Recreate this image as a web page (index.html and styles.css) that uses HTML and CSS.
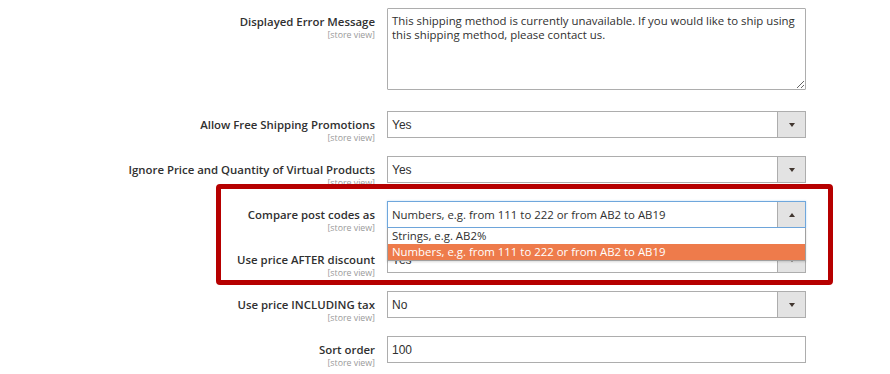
FILE: index.html
```html
<!DOCTYPE html>
<html lang="en">
<head>
<meta charset="utf-8">
<title>Table rates settings</title>
<link rel="stylesheet" href="styles.css">
</head>
<body>
<div class="page">
  <form class="config">
    <div class="row row-tall">
      <div class="label"><span class="title">Displayed Error Message</span><span class="scope">[store view]</span></div>
      <div class="control"><textarea class="textarea" readonly>This shipping method is currently unavailable. If you would like to ship using this shipping method, please contact us.</textarea></div>
    </div>
    <div class="row">
      <div class="label"><span class="title">Allow Free Shipping Promotions</span><span class="scope">[store view]</span></div>
      <div class="control"><div class="select"><span class="value">Yes</span><span class="btn"><span class="tri down"></span></span></div></div>
    </div>
    <div class="row">
      <div class="label"><span class="title">Ignore Price and Quantity of Virtual Products</span><span class="scope">[store view]</span></div>
      <div class="control"><div class="select"><span class="value">Yes</span><span class="btn"><span class="tri down"></span></span></div></div>
    </div>
    <div class="row">
      <div class="label"><span class="title">Compare post codes as</span><span class="scope">[store view]</span></div>
      <div class="control">
        <div class="select focused"><span class="value sans">Numbers, e.g. from 111 to 222 or from AB2 to AB19</span><span class="btn"><span class="tri up"></span></span></div>
        <ul class="dropdown">
          <li class="option">Strings, e.g. AB2%</li>
          <li class="option selected">Numbers, e.g. from 111 to 222 or from AB2 to AB19</li>
        </ul>
      </div>
    </div>
    <div class="row">
      <div class="label"><span class="title">Use price AFTER discount</span><span class="scope">[store view]</span></div>
      <div class="control"><div class="select"><span class="value">Yes</span><span class="btn"><span class="tri down"></span></span></div></div>
    </div>
    <div class="row">
      <div class="label"><span class="title">Use price INCLUDING tax</span><span class="scope">[store view]</span></div>
      <div class="control"><div class="select"><span class="value">No</span><span class="btn"><span class="tri down"></span></span></div></div>
    </div>
    <div class="row">
      <div class="label"><span class="title">Sort order</span><span class="scope">[store view]</span></div>
      <div class="control"><div class="input"><span class="value">100</span></div></div>
    </div>
  </form>
  <div class="highlight"></div>
</div>
</body>
</html>
```
FILE: styles.css
```css
html, body {
  margin: 0;
  padding: 0;
  background: #ffffff;
}

.page {
  position: relative;
  width: 890px;
  height: 374px;
  overflow: hidden;
  font-family: "Open Sans", "Liberation Sans", sans-serif;
  color: #303030;
}

.config {
  display: flex;
  flex-direction: column;
  gap: 18px;
  padding-top: 8px;
}

.row {
  display: grid;
  grid-template-columns: 375px 419px;
  grid-template-rows: 27px;
  column-gap: 12px;
  height: 27px;
}

.row-tall {
  grid-template-rows: 82px;
  height: 82px;
  margin-bottom: 3px;
}

.label {
  display: flex;
  flex-direction: column;
  align-items: flex-end;
  text-align: right;
  padding-top: 5px;
  min-height: 0;
}

.title {
  font-size: 11.4px;
  font-weight: 600;
  line-height: 17px;
  color: #303030;
  white-space: nowrap;
}

.scope {
  font-size: 8.8px;
  line-height: 10px;
  color: #9a9a9a;
  white-space: nowrap;
}

.control {
  position: relative;
}

.textarea {
  display: block;
  box-sizing: border-box;
  width: 419px;
  height: 82px;
  margin: 0;
  padding: 5px 4px;
  border: 1px solid #adadad;
  border-radius: 1px;
  font-family: "Open Sans", "Liberation Sans", sans-serif;
  font-size: 11.4px;
  line-height: 14px;
  color: #303030;
  background: #ffffff;
  outline: none;
  resize: vertical;
}

.select,
.input {
  box-sizing: border-box;
  display: flex;
  align-items: stretch;
  height: 27px;
  border: 1px solid #adadad;
  background: #ffffff;
}

.value {
  flex: 1;
  display: flex;
  align-items: center;
  padding-left: 4px;
  font-family: "Liberation Sans", Arial, sans-serif;
  font-size: 12px;
  color: #303030;
  white-space: nowrap;
  overflow: hidden;
}

.value.sans {
  font-family: "Open Sans", "Liberation Sans", sans-serif;
  font-size: 11.4px;
}

.btn {
  width: 27px;
  display: flex;
  align-items: center;
  justify-content: center;
  background: #e3e3e3;
  border-left: 1px solid #adadad;
}

.tri {
  width: 0;
  height: 0;
  border-left: 3.5px solid transparent;
  border-right: 3.5px solid transparent;
}

.tri.down {
  border-top: 4px solid #41362f;
}

.tri.up {
  border-bottom: 4px solid #41362f;
}

.select.focused {
  border-color: #6fa7dc;
  box-shadow: 0 0 2px rgba(0, 110, 210, 0.25);
}

.dropdown {
  position: absolute;
  left: 0;
  top: 27px;
  width: 419px;
  box-sizing: border-box;
  margin: 0;
  padding: 0;
  list-style: none;
  background: #ffffff;
  border: 1px solid #a0a0a0;
  border-top: none;
  box-shadow: 0 1px 2px rgba(0, 0, 0, 0.15);
  z-index: 2;
}

.option {
  height: 16px;
  line-height: 16px;
  padding-left: 4px;
  font-family: "Open Sans", "Liberation Sans", sans-serif;
  font-size: 11.4px;
  color: #303030;
  white-space: nowrap;
}

.option.selected {
  background: #ee7b4b;
  color: #ffffff;
}

.highlight {
  position: absolute;
  left: 216px;
  top: 184px;
  width: 617px;
  height: 101px;
  box-sizing: border-box;
  border: 5px solid #b60000;
  border-radius: 4px;
  z-index: 3;
  pointer-events: none;
}
```
